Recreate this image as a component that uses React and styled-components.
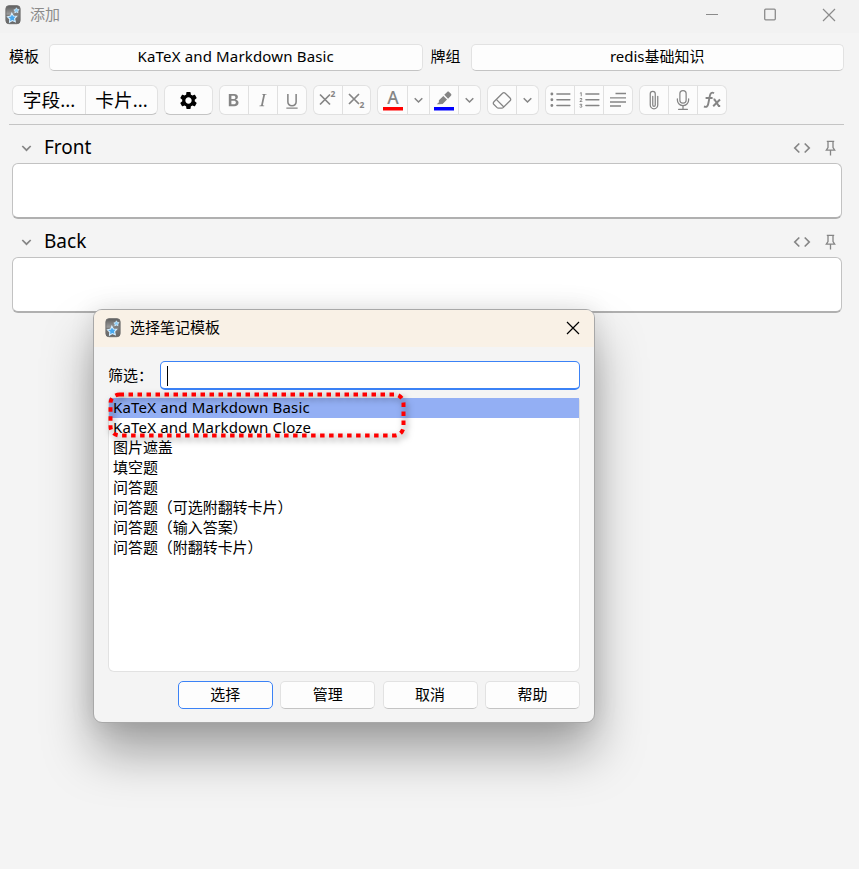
import React, { useState } from 'react';
import styled, { createGlobalStyle } from 'styled-components';
import {
  BsTypeBold,
  BsTypeItalic,
  BsTypeUnderline,
  BsEraser,
  BsListUl,
  BsListOl,
  BsPaperclip,
  BsMic
} from 'react-icons/bs';
import { MdSettings } from 'react-icons/md';

const GlobalStyle = createGlobalStyle`
  * {
    box-sizing: border-box;
  }

  body {
    margin: 0;
    background: #f4f4f4;
    font-family: "Noto Sans", "Noto Sans CJK SC", sans-serif;
    font-size: 15px;
    color: #000;
  }

  button, input {
    font: inherit;
    color: inherit;
  }
`

const Window = styled.div`
  position: relative;
  width: 859px;
  height: 869px;
  overflow: hidden;
  background: #f4f4f4;
`

const TitleBar = styled.header`
  display: flex;
  align-items: center;
  height: 33px;
  padding: 0 23px 3px 5px;
  background: #f2f2f2;
  color: #8b8b8b;
`

const Title = styled.span`
  flex: 1;
  margin-left: 9px;
  padding-bottom: 2px;
  line-height: 20px;
`

const WindowControls = styled.div`
  display: flex;
  gap: 46px;
`

const Selectors = styled.div`
  display: flex;
  align-items: center;
  height: 28px;
  margin: 10px 15px 0 9px;
`

const SelectorLabel = styled.label`
  width: 40px;
  padding-bottom: 2px;
  line-height: 20px;
`

const Button = styled.button`
  flex: ${props => props.$grow ? 1 : 'none'};
  width: ${props => props.$width || 'auto'};
  height: ${props => props.$grow ? 27 : 28}px;
  padding: 0 0 2px;
  line-height: 23px;
  background: #fdfdfd;
  border: 1px solid ${props => props.$primary ? '#3b82f6' : '#e2e2e2'};
  border-bottom-color: ${props => props.$primary ? '#3b82f6' : '#c4c4c4'};
  border-radius: 5px;
`

const SelectorButton = styled(Button)`
  margin-right: ${props => props.$last ? 0 : '8px'};
  letter-spacing: ${props => props.$last ? 0 : '0.16px'};
`

const Toolbar = styled.div`
  display: flex;
  gap: 6px;
  height: 40px;
  margin: 14px 15px 0 9px;
  padding-left: 3px;
  border-bottom: 1px solid #c4c4c4;
`

const Group = styled.div`
  display: flex;
  height: 30px;
  background: #fcfcfc;
  border: 1px solid #e2e2e2;
  border-bottom-color: ${props => props.$strong ? '#c4c4c4' : '#e0e0e0'};
  border-radius: 6px;
`

const Tool = styled.button`
  display: flex;
  align-items: center;
  justify-content: center;
  width: ${props => props.$width || 29}px;
  padding: 0;
  background: none;
  border: 0;
  border-left: ${props => props.$first ? 0 : '1px solid #e0e0e0'};
  color: ${props => props.$dark ? '#000' : '#858585'};
  font-size: 18.7px;
  line-height: 26px;

  svg {
    flex: none;
    overflow: visible;
  }
`

const Field = styled.section`
  margin: 0 17px 0 12px;
  padding-top: 6px;
`

const FieldHeader = styled.div`
  display: flex;
  align-items: center;
  height: 32px;
  padding: 2px 6px 0 9px;
  color: #858585;
`

const FieldName = styled.span`
  flex: 1;
  margin-left: 12px;
  padding-bottom: 3px;
  font-size: 19px;
  line-height: 24px;
  color: #000;
`

const FieldActions = styled.div`
  display: flex;
  gap: 14px;
`

const FieldInput = styled.div`
  height: 56px;
  background: #fff;
  border: 1px solid #c2c2c2;
  border-bottom: 2px solid #b0b0b0;
  border-radius: 6px;
`

const Dialog = styled.div`
  position: absolute;
  left: 93px;
  top: 309px;
  width: 502px;
  height: 414px;
  background: #f4f4f4;
  border: 1px solid #a8a8a8;
  border-radius: 9px;
  box-shadow: 0 30px 50px rgba(0, 0, 0, 0.34), 0 0 24px rgba(0, 0, 0, 0.1);
`

const DialogTitleBar = styled.div`
  display: flex;
  align-items: center;
  height: 37px;
  padding: 0 14px 1px 11px;
  background: #f9f1e6;
  border-radius: 8px 8px 0 0;
`

const DialogBody = styled.div`
  padding: 14px 14px 0;
`

const FilterRow = styled.div`
  display: flex;
  align-items: center;
`

const FilterLabel = styled.label`
  width: 52px;
  padding-bottom: 2px;
  line-height: 20px;
  white-space: nowrap;
`

const FilterInput = styled.div`
  flex: 1;
  height: 29px;
  padding: 4px 6px;
  background: #fff;
  border: 1px solid #3b82f6;
  border-bottom-width: 2px;
  border-radius: 5px;
`

const Caret = styled.div`
  width: 1px;
  height: 20px;
  background: #000;
`

const TemplateList = styled.ul`
  height: 274px;
  margin: 8px 0 0;
  padding: 0;
  list-style: none;
  background: #fff;
  border: 1px solid #e2e2e2;
  border-top: 0;
  border-radius: 3px 3px 6px 6px;
`

const TemplateItem = styled.li`
  height: 20px;
  padding-left: 4px;
  line-height: 18px;
  letter-spacing: ${props => props.$latin ? '0.18px' : '-0.05px'};
  white-space: nowrap;
  background: ${props => props.$selected ? '#93aff4' : 'none'};
`

const DialogButtons = styled.div`
  display: flex;
  justify-content: flex-end;
  gap: 7.4px;
  margin-top: 9px;
`

const Marker = styled.svg`
  position: absolute;
  left: 12px;
  top: 80px;
  overflow: visible;
  filter: drop-shadow(2px 3px 3px rgba(0, 0, 0, 0.5));
`

const AppIcon = () => (
  <svg width="16" height="20" viewBox="0 0 16 20">
    <defs>
      <linearGradient id="case" x1="0" y1="0" x2="0" y2="1">
        <stop offset="0" stopColor="#5d5d5d" />
        <stop offset="0.45" stopColor="#999" />
        <stop offset="1" stopColor="#666" />
      </linearGradient>
    </defs>
    <rect x="0.9" y="0.7" width="14.2" height="18" rx="3" fill="url(#case)" stroke="#6e6e6e" />
    <path d="M1 10Q9 10 15 5V15Q15 18 12 18H4Q1 18 1 15Z" fill="#666" opacity=".5" />
    <path d="M6.8 8.2l1.7 2.8 3.2.2-2.1 2.4.7 3.2-3-1.2-2.8 1.6.3-3.2-2.3-2.2 3.1-.7Z" fill="#48a8ee" stroke="#d7efff" strokeWidth="1.1" />
    <path d="M11.4 2.8l.8 1.6 1.8.2-1.2 1.4.2 1.7-1.7-.7-1.5.9.2-1.8-1.2-1.2 1.7-.4Z" fill="#8accf7" stroke="#d7efff" strokeWidth=".7" />
  </svg>
)

const Cross = ({ color }) => (
  <svg width="14" height="14" viewBox="0 0 14 14" stroke={color} strokeWidth="1.2">
    <path d="M1 1L13 13M13 1L1 13" />
  </svg>
)

const Chevron = ({ size = 10 }) => (
  <svg width={size} height="7" viewBox="0 0 10 7" fill="none" stroke="#858585" strokeWidth="1.7">
    <path d="M0.8 1L5 5.2L9.2 1" />
  </svg>
)

const ScriptIcon = ({ sub }) => (
  <svg width="18" height="22" viewBox="0 0 18 22" stroke="#858585" strokeWidth="1.7">
    <path d={sub ? 'M1 5L11 15M11 5L1 15' : 'M1 5.5L11 15.5M11 5.5L1 15.5'} />
    <text x="11.5" y={sub ? 18.5 : 8} fontSize="8.5" fontWeight="700" fill="#858585" stroke="none">2</text>
  </svg>
)

const TextColorIcon = () => (
  <svg width="20" height="26" viewBox="0 0 20 26">
    <text x="10" y="16.5" textAnchor="middle" fontSize="17.5" fontWeight="500" fill="#858585">A</text>
    <rect y="20" width="20" height="3.5" fill="#f00" />
  </svg>
)

const HighlightIcon = () => (
  <svg width="20" height="26" viewBox="0 0 20 26">
    <path
      transform="translate(-.8 2.4) scale(.88)"
      fill="#858585"
      d="M4 17l2.8-2.8c-.6-.6-.6-1.5 0-2.1l4.7-4.7 4.2 4.2-4.7 4.7c-.6.6-1.5.6-2.1.1l-.7.6H4M15.9 2.9c.6-.6 1.5-.6 2.1 0l2.2 2.1c.6.6.6 1.5 0 2.2l-3.3 3.3-4.3-4.3z"
    />
    <rect y="20" width="20" height="3.5" fill="#00f" />
  </svg>
)

const ParagraphIcon = () => (
  <svg width="16" height="16" viewBox="0 0 16 16" stroke="#858585" strokeWidth="1.3">
    <path d="M5.5 1.5H16M0 5.8H16M0 10H16M0 14H11" />
  </svg>
)

const FunctionIcon = () => (
  <svg width="18" height="20" viewBox="0 0 18 20" fill="none" stroke="#858585">
    <path strokeWidth="1.9" d="M11 3.2C8.8 1.8 7.4 3.2 6.9 5.6L5.2 14C4.7 16.6 3.2 17.6 1 16.4M2.6 8H9.6" />
    <path strokeWidth="2" d="M10.5 9.5H11.5L15.8 16H17.2M17 9.5L10.2 16.2" />
  </svg>
)

const CodeIcon = () => (
  <svg width="18" height="16" viewBox="0 0 18 16" fill="none" stroke="#858585" strokeWidth="1.7">
    <path d="M6.3 3.5L1.8 8L6.3 12.5M11.7 3.5L16.2 8L11.7 12.5" />
  </svg>
)

const PinIcon = () => (
  <svg width="11" height="16" viewBox="0 0 11 16" fill="none" stroke="#858585" strokeWidth="1.3">
    <path d="M1.8 1.3H9.2M3 1.3V7.5L1.3 10.2H9.7L8 7.5V1.3M5.5 10.2V15.5" />
  </svg>
)

const templates = [
  'KaTeX and Markdown Basic',
  'KaTeX and Markdown Cloze',
  '图片遮盖',
  '填空题',
  '问答题',
  '问答题（可选附翻转卡片）',
  '问答题（输入答案）',
  '问答题（附翻转卡片）'
];

const App = () => {
  const [selected, setSelected] = useState(0)

  return (
    <Window>
      <GlobalStyle />
      <TitleBar>
        <AppIcon />
        <Title>添加</Title>
        <WindowControls>
          <svg width="12" height="14" stroke="#8b8b8b"><path d="M0 6.5H12" /></svg>
          <svg width="12" height="14" fill="none" stroke="#8b8b8b" strokeWidth="1.3"><rect x="0.7" y="1.2" width="10.6" height="10.6" rx="1" /></svg>
          <Cross color="#8b8b8b" />
        </WindowControls>
      </TitleBar>

      <Selectors>
        <SelectorLabel>模板</SelectorLabel>
        <SelectorButton $grow>KaTeX and Markdown Basic</SelectorButton>
        <SelectorLabel>牌组</SelectorLabel>
        <SelectorButton $grow $last>redis基础知识</SelectorButton>
      </Selectors>

      <Toolbar>
        <Group $strong>
          <Tool $first $dark $width={72}>字段...</Tool>
          <Tool $dark $width={72}>卡片...</Tool>
        </Group>
        <Group $strong>
          <Tool $first $dark $width={47}><MdSettings size={21} /></Tool>
        </Group>
        <Group>
          <Tool $first $width={28}><BsTypeBold size={20} /></Tool>
          <Tool><BsTypeItalic size={20} /></Tool>
          <Tool><BsTypeUnderline size={20} /></Tool>
        </Group>
        <Group>
          <Tool $first $width={28}><ScriptIcon /></Tool>
          <Tool $width={28}><ScriptIcon sub /></Tool>
        </Group>
        <Group>
          <Tool $first><TextColorIcon /></Tool>
          <Tool $width={22}><Chevron size={9} /></Tool>
          <Tool><HighlightIcon /></Tool>
          <Tool $width={22}><Chevron size={9} /></Tool>
        </Group>
        <Group>
          <Tool $first $width={28}><BsEraser size={20} /></Tool>
          <Tool $width={22}><Chevron size={9} /></Tool>
        </Group>
        <Group>
          <Tool $first $width={28}><BsListUl size={23} /></Tool>
          <Tool><BsListOl size={23} /></Tool>
          <Tool><ParagraphIcon /></Tool>
        </Group>
        <Group>
          <Tool $first $width={28}><BsPaperclip size={20} /></Tool>
          <Tool><BsMic size={20} /></Tool>
          <Tool><FunctionIcon /></Tool>
        </Group>
      </Toolbar>

      {['Front', 'Back'].map(name => (
        <Field key={name}>
          <FieldHeader>
            <Chevron size={11} />
            <FieldName>{name}</FieldName>
            <FieldActions>
              <CodeIcon />
              <PinIcon />
            </FieldActions>
          </FieldHeader>
          <FieldInput />
        </Field>
      ))}

      <Dialog>
        <DialogTitleBar>
          <AppIcon />
          <Title>选择笔记模板</Title>
          <Cross color="#000" />
        </DialogTitleBar>
        <DialogBody>
          <FilterRow>
            <FilterLabel>筛选：</FilterLabel>
            <FilterInput><Caret /></FilterInput>
          </FilterRow>
          <TemplateList>
            {templates.map((template, index) => (
              <TemplateItem
                key={template}
                $latin={index < 2}
                $selected={index === selected}
                onClick={() => setSelected(index)}
              >
                {template}
              </TemplateItem>
            ))}
          </TemplateList>
          <DialogButtons>
            <Button $primary $width="95px">选择</Button>
            <Button $width="95px">管理</Button>
            <Button $width="95px">取消</Button>
            <Button $width="95px">帮助</Button>
          </DialogButtons>
        </DialogBody>
        <Marker width="300" height="50" fill="none" stroke="#f00" strokeWidth="4">
          <rect x="4.5" y="4.5" width="293" height="41" rx="9" strokeDasharray="4.5 4.5" />
        </Marker>
      </Dialog>
    </Window>
  );
}

export default App;
